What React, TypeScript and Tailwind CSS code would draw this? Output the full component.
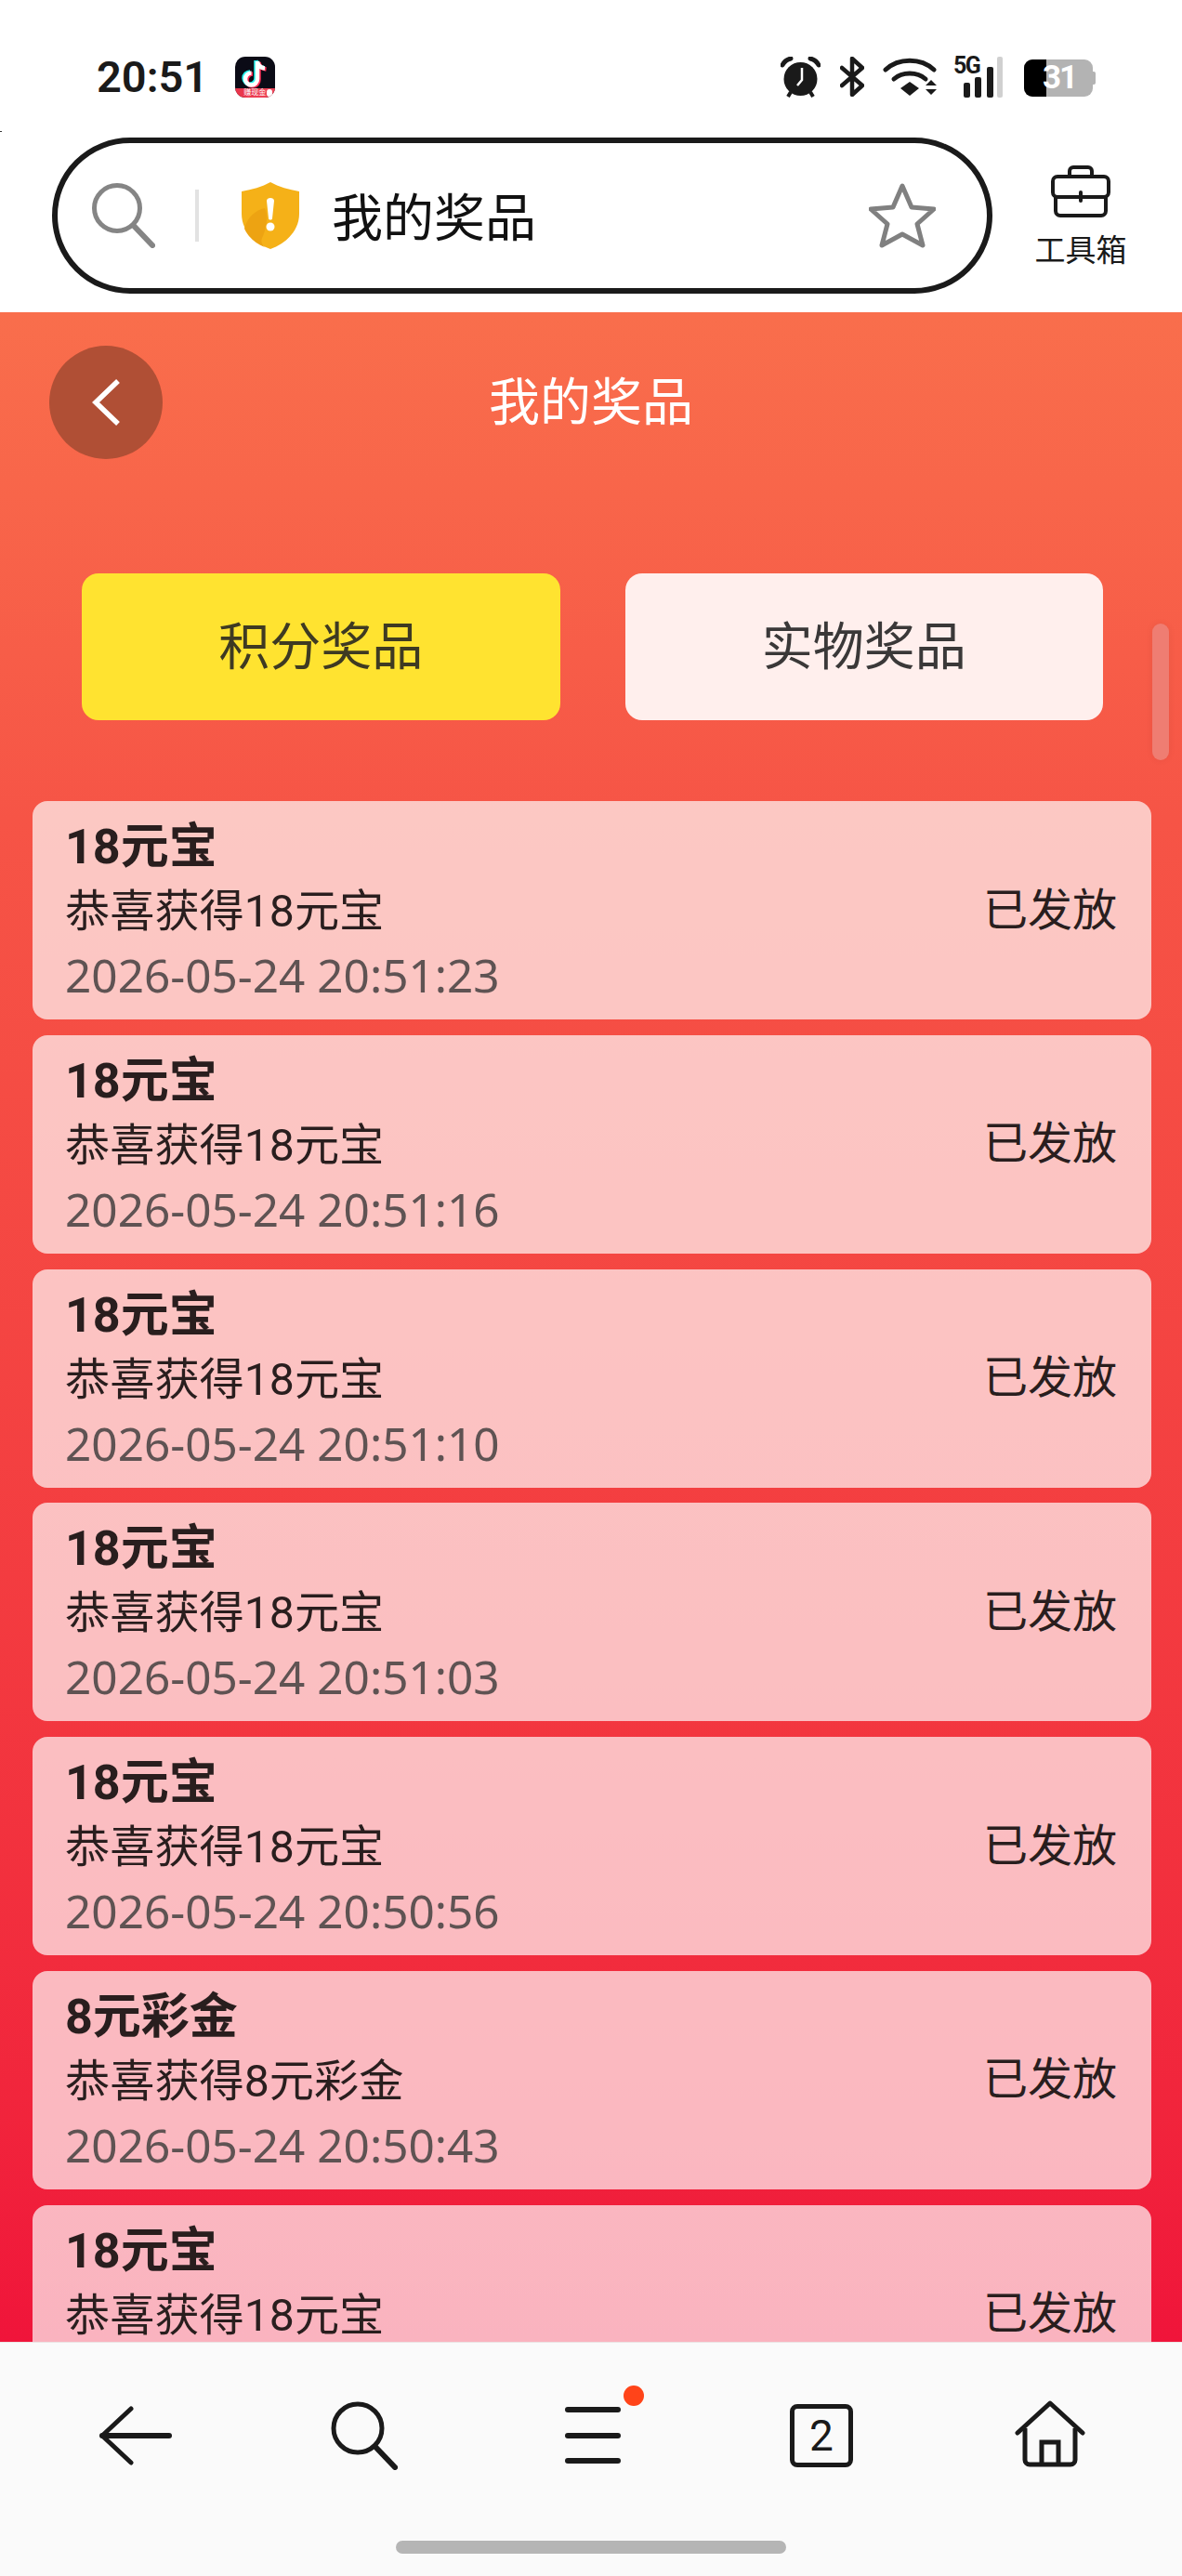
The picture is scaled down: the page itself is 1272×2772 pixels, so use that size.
import React from 'react';

const cjk = { fontFamily: 'Roboto, "Noto Sans CJK SC", sans-serif' };
const latin = { fontFamily: 'Roboto, sans-serif' };
const notoTime = { fontFamily: '"Noto Sans", "Noto Sans CJK SC", sans-serif' };

const prizes = [
  { title: '18元宝', desc: '恭喜获得18元宝', time: '2026-05-24 20:51:23' },
  { title: '18元宝', desc: '恭喜获得18元宝', time: '2026-05-24 20:51:16' },
  { title: '18元宝', desc: '恭喜获得18元宝', time: '2026-05-24 20:51:10' },
  { title: '18元宝', desc: '恭喜获得18元宝', time: '2026-05-24 20:51:03' },
  { title: '18元宝', desc: '恭喜获得18元宝', time: '2026-05-24 20:50:56' },
  { title: '8元彩金', desc: '恭喜获得8元彩金', time: '2026-05-24 20:50:43' },
  { title: '18元宝', desc: '恭喜获得18元宝', time: '2026-05-24 20:50:37' },
];

const note = 'M24 5v19a6.500 6.500 0 1 1-6.500-6.500M24 5c.5 4.500 3.500 7 8 7.500';

function AppBadge() {
  return (
    <div className="w-[43px] h-[44px] rounded-[11px] overflow-hidden bg-[#0b0b16] flex flex-col ml-[29px]">
      <svg className="flex-none" width="43" height="34" viewBox="0 0 43 34" fill="none">
        <path d={note} stroke="#25f4ee" strokeWidth="4.500" transform="translate(-1.500 -1)" />
        <path d={note} stroke="#fe2c55" strokeWidth="4.500" transform="translate(1.500 1)" />
        <path d={note} stroke="#ffffff" strokeWidth="4.500" />
      </svg>
      <div className="flex-1 bg-gradient-to-r from-[#e8344a] to-[#f0455a] flex items-center pl-[9px] gap-[1px]">
        <span className="text-white text-[8px] leading-[10px] whitespace-nowrap" style={cjk}>赚现金</span>
        <div className="w-[6px] h-[8px] rounded-full bg-white" />
      </div>
    </div>
  );
}

function StatusIcons() {
  return (
    <div className="flex items-start">
      <svg width="43" height="44" viewBox="0 0 43 44" fill="none">
        <circle cx="21.500" cy="24" r="18" fill="#1a1a1a" />
        <path d="M2 9c2-4 5-6 9-7M41 9c-2-4-5-6-9-7" stroke="#1a1a1a" strokeWidth="5" strokeLinecap="round" />
        <path d="M8 43l3-5M35 43l-3-5" stroke="#1a1a1a" strokeWidth="4" />
        <path d="M23 12v13l-5 6" stroke="#fff" strokeWidth="2.500" />
      </svg>
      <svg className="ml-[21px]" width="26" height="43" viewBox="0 0 26 43" fill="none">
        <path d="M2 12l22 19-11 10V2l11 10L2 31" stroke="#1a1a1a" strokeWidth="4.500" strokeLinecap="round" strokeLinejoin="round" />
      </svg>
      <svg className="ml-[20px]" width="59" height="44" viewBox="0 0 59 44" fill="none">
        <path d="M3 14C17 1 41 1 55 14" stroke="#1a1a1a" strokeWidth="5" strokeLinecap="round" />
        <path d="M12 24c9-8 25-8 34 0" stroke="#1a1a1a" strokeWidth="5" strokeLinecap="round" />
        <path d="M19 34l10-7 10 7-10 8z" fill="#1a1a1a" />
        <path d="M46 31l6-6 6 6zM46 35h12l-6 6z" fill="#1a1a1a" />
      </svg>
      <div className="relative ml-[17px] w-[53px] h-[44px]">
        <span className="absolute left-0 top-[-4px] text-[25px] leading-[28px] font-bold text-[#1a1a1a] tracking-[-1.500px]" style={latin}>5G</span>
        <svg width="53" height="44" viewBox="0 0 53 44">
          <rect x="11" y="28" width="7" height="16" rx="2" fill="#1a1a1a" />
          <rect x="23" y="22" width="7" height="22" rx="2" fill="#1a1a1a" />
          <rect x="36" y="11" width="7" height="33" rx="2" fill="#1a1a1a" />
          <rect x="47" y="0" width="6" height="44" rx="2" fill="#d0d0d0" />
        </svg>
      </div>
      <div className="ml-[23px] mt-[3px] flex items-center">
        <div className="relative w-[74px] h-[40px] rounded-[9px] overflow-hidden flex bg-[#b3b3b3]">
          <div className="w-[24px] bg-black" />
          <span className="absolute left-[20px] top-0 text-[35px] leading-[40px] font-bold text-white tracking-[-2px]" style={latin}>31</span>
        </div>
        <div className="w-[3px] h-[14px] bg-[#b3b3b3] rounded-r-[2px]" />
      </div>
    </div>
  );
}

function SearchBar() {
  return (
    <div className="w-[1012px] h-[168px] rounded-[84px] border-[6px] border-[#1a1a1a] flex items-center pl-[37px] bg-white">
      <svg width="68" height="70" viewBox="0 0 68 70" fill="none">
        <circle cx="27" cy="27" r="24.500" stroke="#858585" strokeWidth="5" />
        <path d="M45 46l20 21" stroke="#858585" strokeWidth="6" strokeLinecap="round" />
      </svg>
      <div className="ml-[43px] w-[4px] h-[56px] bg-[#e2e2e2]" />
      <svg className="ml-[46px]" width="62" height="72" viewBox="0 0 62 72">
        <path d="M31 0c9 5 20 8 31 10v24c0 18-14 32-31 38C14 66 0 52 0 34V10C11 8 22 5 31 0z" fill="#f5b118" />
        <path d="M3 50c3-12 12-20 22-22 4 8 2 20-2 30-2 4-3 7 2 12C15 66 7 59 3 50z" fill="#eda312" />
        <path d="M27 20c0-4 8-4 8 0l-2 19c0 2-4 2-4 0z" fill="#fff" />
        <circle cx="31" cy="48" r="4.500" fill="#fff" />
      </svg>
      <span className="ml-[35px] mt-[5px] text-[55px] leading-[70px] text-[#111] flex-1" style={cjk}>我的奖品</span>
      <svg className="mr-[55px]" width="72" height="70" viewBox="0 0 72 70" fill="none">
        <path d="M36 3l10 23 24 2-18 16 6 23-22-12-22 12 6-23L2 28l24-2z" stroke="#808080" strokeWidth="5" strokeLinejoin="round" />
      </svg>
    </div>
  );
}

function ToolBox() {
  return (
    <div className="w-[190px] flex flex-col items-center pt-[30px]">
      <svg width="64" height="56" viewBox="0 0 64 56" fill="none">
        <path d="M20 12V6a4 4 0 0 1 4-4h16a4 4 0 0 1 4 4v6" stroke="#1a1a1a" strokeWidth="4" />
        <rect x="2" y="12" width="60" height="22" rx="5" stroke="#1a1a1a" strokeWidth="4" />
        <path d="M5 32v17a5 5 0 0 0 5 5h44a5 5 0 0 0 5-5V32" stroke="#1a1a1a" strokeWidth="4" />
        <path d="M32 29v9" stroke="#1a1a1a" strokeWidth="4" strokeLinecap="round" />
      </svg>
      <span className="mt-[16px] text-[33px] leading-[40px] text-[#1a1a1a]" style={cjk}>工具箱</span>
    </div>
  );
}

function PrizeCard({ title, desc, time }: { title: string; desc: string; time: string }) {
  return (
    <div className="h-[235px] flex-none rounded-[16px] bg-white/[0.68] flex items-center justify-between pl-[35px] pr-[37px]" style={cjk}>
      <div className="flex flex-col pt-[2px]">
        <span className="text-[52px] leading-[69px] font-bold text-[#291e1e]">{title}</span>
        <span className="text-[48.200px] leading-[69px] text-[#291e1e]">{desc}</span>
        <span className="text-[49.500px] leading-[69px] text-[#5f5353]" style={notoTime}>{time}</span>
      </div>
      <span className="text-[48px] leading-[69px] text-[#291e1e] mb-[1px]">已发放</span>
    </div>
  );
}

function BottomNav() {
  return (
    <div className="h-[252px] flex-none bg-[#fafafa] border-t border-[#ece4e4]">
      <div className="ml-[23px] w-[1230px] h-[199px] grid grid-cols-5 items-center justify-items-center">
        <svg width="78" height="64" viewBox="0 0 78 64" fill="none">
          <path d="M3 32h72" stroke="#1a1a1a" strokeWidth="6" strokeLinecap="round" />
          <path d="M34 3L3 32l31 29" stroke="#1a1a1a" strokeWidth="5" strokeLinecap="round" strokeLinejoin="round" />
        </svg>
        <svg width="72" height="74" viewBox="0 0 72 74" fill="none">
          <circle cx="29" cy="29" r="26" stroke="#1a1a1a" strokeWidth="5" />
          <path d="M48 49l21 22" stroke="#1a1a1a" strokeWidth="6" strokeLinecap="round" />
        </svg>
        <div className="relative w-[60px] flex flex-col gap-[21.500px]">
          <div className="h-[6px] rounded-full bg-[#1a1a1a]" />
          <div className="h-[6px] rounded-full bg-[#1a1a1a]" />
          <div className="h-[6px] rounded-full bg-[#1a1a1a]" />
          <div className="absolute left-[63px] top-[-23px] w-[22px] h-[22px] rounded-full bg-[#ff4419]" />
        </div>
        <div className="w-[68px] h-[68px] rounded-[8px] border-[5px] border-[#1a1a1a] flex items-center justify-center text-[46px] leading-none text-[#1a1a1a]" style={latin}>2</div>
        <svg className="mb-[4px]" width="76" height="72" viewBox="0 0 76 72" fill="none">
          <path d="M3 35L38 3l35 32" stroke="#1a1a1a" strokeWidth="5" strokeLinecap="round" strokeLinejoin="round" />
          <path d="M11 30v34a5 5 0 0 0 5 5h44a5 5 0 0 0 5-5V30" stroke="#1a1a1a" strokeWidth="5" />
          <path d="M29 69V45h18v24" stroke="#1a1a1a" strokeWidth="5" />
        </svg>
      </div>
      <div className="mt-[14px] mx-auto w-[420px] h-[14px] rounded-full bg-[#b5b5b5]" />
    </div>
  );
}

export default function App() {
  return (
    <div className="relative w-[1272px] h-[2772px] overflow-hidden flex flex-col bg-white">
      <div className="absolute left-0 top-[141px] w-[2px] h-[1px] bg-[#333]" />

      <div className="h-[336px] flex-none bg-white">
        <div className="h-[148px] pt-[61px] pl-[104px] pr-[93px] flex items-start justify-between">
          <div className="flex items-center h-[44px]">
            <span className="text-[47px] leading-[44px] font-semibold text-[#1a1a1a]" style={latin}>20:51</span>
            <AppBadge />
          </div>
          <StatusIcons />
        </div>
        <div className="flex pl-[56px]">
          <SearchBar />
          <ToolBox />
        </div>
      </div>

      <div className="relative flex-1 min-h-0 overflow-hidden bg-gradient-to-b from-[#f96e4c] via-[#f65446] via-25% to-[#f0143a]">
        <div className="pt-[36px] px-[53px] flex items-center">
          <div className="w-[122px] h-[122px] rounded-full bg-[#b04f35] flex items-center justify-center">
            <svg width="32" height="54" viewBox="0 0 32 54" fill="none">
              <path d="M29 4L5 27l24 23" stroke="#fff" strokeWidth="5.500" />
            </svg>
          </div>
          <div className="flex-1 text-center text-[55px] text-white" style={cjk}>我的奖品</div>
          <div className="w-[122px]" />
        </div>

        <div className="mt-[123px] pl-[88px] pr-[85px] flex gap-[70px]">
          <div className="flex-1 h-[158px] rounded-[18px] bg-[#ffe330] flex items-center justify-center text-[55px] text-[#3e3a22]" style={cjk}>积分奖品</div>
          <div className="flex-1 h-[158px] rounded-[18px] bg-[#ffefed] flex items-center justify-center text-[55px] text-[#3a3838]" style={cjk}>实物奖品</div>
        </div>

        <div className="mt-[87px] pl-[35px] pr-[33px] flex flex-col gap-[16.800px]">
          {prizes.map((p) => (
            <PrizeCard key={p.time} title={p.title} desc={p.desc} time={p.time} />
          ))}
        </div>

        <div className="absolute left-[1240px] top-[335px] w-[18px] h-[147px] rounded-full bg-[#ef7d72] shadow-[0_0_8px_rgba(0,0,0,0.06)]" />
      </div>

      <BottomNav />
    </div>
  );
}
